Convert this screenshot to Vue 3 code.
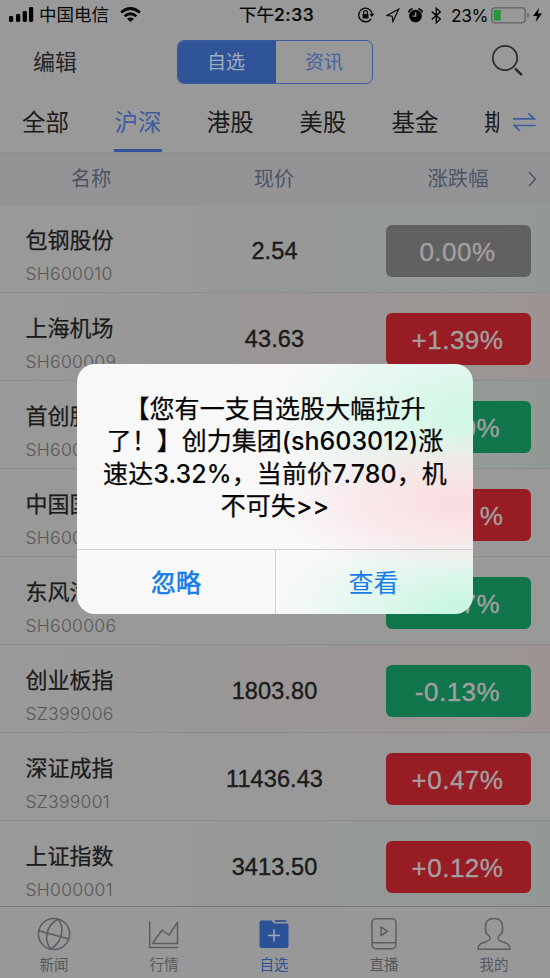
<script setup>
const tabs = ['全部', '沪深', '港股', '美股', '基金']
const stocks = [
  { name: '包钢股份', code: 'SH600010', price: '2.54', pct: '0.00%', tone: 'flat', tint: 'cool' },
  { name: '上海机场', code: 'SH600009', price: '43.63', pct: '+1.39%', tone: 'up', tint: 'warm' },
  { name: '首创股份', code: 'SH600008', price: '', pct: '-0.20%', tone: 'down', tint: 'cool' },
  { name: '中国国贸', code: 'SH600007', price: '', pct: '%', tone: 'up narrow', tint: 'plain' },
  { name: '东风汽车', code: 'SH600006', price: '', pct: '-0.17%', tone: 'down', tint: 'plain' },
  { name: '创业板指', code: 'SZ399006', price: '1803.80', pct: '-0.13%', tone: 'down', tint: 'warm' },
  { name: '深证成指', code: 'SZ399001', price: '11436.43', pct: '+0.47%', tone: 'up', tint: 'plain' },
  { name: '上证指数', code: 'SH000001', price: '3413.50', pct: '+0.12%', tone: 'up', tint: 'cool' },
]
</script>

<template>
  <div class="screen">
    <header class="status">
      <div class="st-left">
        <svg width="25" height="16" viewBox="0 0 25 16"><rect x="0" y="9" width="4.2" height="6" rx="1.4"/><rect x="7" y="7" width="4.2" height="8" rx="1.4"/><rect x="13.7" y="4" width="4.2" height="11" rx="1.4"/><rect x="20" y="0" width="4.2" height="15" rx="1.4"/></svg>
        <span class="carrier">中国电信</span>
        <svg class="wifi" width="21" height="16" viewBox="0 0 21 16" fill="none" stroke="#050505" stroke-width="2.7"><path d="M1.1 5.5Q10.5-2.5 19.9 5.5"/><path d="M4.6 9.2Q10.5 4.3 16.4 9.2"/><path d="M10.5 15 6.9 11.8Q10.5 9 14.1 11.8Z" fill="#050505" stroke="none"/></svg>
      </div>
      <div class="clock">下午<b>2:33</b></div>
      <div class="st-right">
        <svg width="17" height="16" viewBox="0 0 17 16" fill="none" stroke="#080808" stroke-width="1.4"><path d="M13.2 11.8A6.8 6.8 0 1 1 14.2 6.5"/><path d="M11.3 6.7h5.2l-2.6 3.2z" fill="#080808" stroke="none"/><rect x="4.5" y="7" width="6" height="4.5" fill="#080808" stroke="none"/><path d="M5.6 7V5.5q0-1.8 1.9-1.8t1.9 1.8V7" stroke-width="1.2"/></svg>
        <svg width="14" height="15" viewBox="0 0 14 15" fill="none" stroke="#111" stroke-width="1.25"><path d="M12.8 1 1 7.4l5.2.8.7 5.4z"/></svg>
        <svg width="15" height="15" viewBox="0 0 15 15"><circle cx="7.5" cy="8" r="6.3"/><path d="M.8 4.5Q1.2 1.2 4.7.9M10.3.9q3.5.3 3.9 3.6" fill="none" stroke="#080808" stroke-width="1.7"/><path d="M7.7 4.2v4H4.6" fill="none" stroke="#999" stroke-width="1.3"/></svg>
        <svg width="11" height="17" viewBox="0 0 11 17" fill="none" stroke="#080808" stroke-width="1.4"><path d="M.8 4.6 9.3 12l-4 3.7V1.3l4 3.7-8.5 7.4"/></svg>
        <span class="battery-text">23%</span>
        <svg width="39" height="17" viewBox="0 0 39 17"><rect x=".8" y=".8" width="33.4" height="15" rx="3" fill="none" stroke="#626262" stroke-width="1.3"/><rect x="2.7" y="3" width="7" height="10.6" fill="#26963b"/><path d="M36.1 5.8q2 .5 2 2.5t-2 2.5z" fill="#686868"/></svg>
        <svg class="bolt" width="9" height="14" viewBox="0 0 9 14"><path d="M6 0 0 8h4L2.8 14 9 5.6H5z"/></svg>
      </div>
    </header>

    <nav class="nav">
      <span class="edit">编辑</span>
      <div class="segment"><span class="seg on">自选</span><span class="seg">资讯</span></div>
      <svg class="search" width="34" height="34" viewBox="0 0 34 34" fill="none" stroke="#2b2b2b"><circle cx="14" cy="14" r="12.2" stroke-width="1.7"/><path d="m25 25.500 5 4.800" stroke-width="2.500" stroke-linecap="square"/></svg>
    </nav>

    <div class="tabs">
      <span v-for="(t, i) in tabs" :key="t" class="tab" :class="{ active: i === 1 }">{{ t }}</span>
      <span class="tab cut">期</span>
      <svg class="swap" width="23" height="20" viewBox="0 0 23 20" fill="none" stroke="#3f5ea0" stroke-width="1.7"><path d="M0 6.800h21.200L15.400 1.500M22.500 13.500H1.200L7 18.800"/></svg>
    </div>

    <div class="cols">
      <span>名称</span><span>现价</span><span>涨跌幅</span>
      <svg width="9" height="16" viewBox="0 0 9 16" fill="none" stroke="#4d5362" stroke-width="1.5"><path d="m1 1 6.500 7L1 15"/></svg>
    </div>

    <main class="list">
      <div v-for="s in stocks" :key="s.code" class="row" :class="s.tint">
        <div class="ident"><div class="name">{{ s.name }}</div><div class="code">{{ s.code }}</div></div>
        <div class="price">{{ s.price }}</div>
        <div class="badge" :class="s.tone">{{ s.pct }}</div>
      </div>
    </main>

    <footer class="tabbar">
      <div class="item">
        <svg width="34" height="34" viewBox="0 0 34 34"><circle cx="17" cy="17" r="15.600"/><path d="M1.800 13.800 31.800 22M21 2q-9 5-11 14.500-1.500 9 3.500 15.500M21 2q5 6 3.500 15-2 10-11 15"/></svg>
        <span>新闻</span>
      </div>
      <div class="item">
        <svg width="34" height="34" viewBox="0 0 34 34"><path d="M2.700 4.500v26h28.500"/><path d="M5.500 26.500 15 13l7 5 8.500-12.700v21.200z"/></svg>
        <span>行情</span>
      </div>
      <div class="item on">
        <svg width="34" height="34" viewBox="0 0 34 34"><path d="M2.500 5.500q0-2 2-2h10l2.500 3h12.500q2 0 2 2V29q0 2-2 2h-25q-2 0-2-2z" fill="#2b5197" stroke="none"/><path d="M18 4h11.500" stroke="#2b5197" stroke-width="1.700"/><path d="M17 12.500v12M11 18.500h12" stroke="#a3acbb" stroke-width="1.500"/></svg>
        <span>自选</span>
      </div>
      <div class="item">
        <svg width="34" height="34" viewBox="0 0 34 34"><rect x="5" y="1.700" width="24" height="30" rx="4"/><path d="M5 25.800h24M14 10v8.500l6.500-4.200z"/></svg>
        <span>直播</span>
      </div>
      <div class="item">
        <svg width="34" height="34" viewBox="0 0 34 34"><path d="M1 32.300q0-5 5-6.500 7-2 7-4.500 0-1.500-1.500-3-3-1.500-3-5.500V9.500q0-8 8.500-8t8.500 8v3.300q0 4-3 5.500-1.500 1.500-1.500 3 0 2.500 7 4.500 5 1.500 5 6.500z"/></svg>
        <span>我的</span>
      </div>
    </footer>

    <section class="dialog">
      <div class="message">
        <p class="l1">【您有一支自选股大幅拉升</p>
        <p class="l2">了！】创力集团<i>(sh603012)</i>涨</p>
        <p class="l3">速达<i>3.32%</i>，当前价<i>7.780</i>，机</p>
        <p class="l4">不可失<i>&gt;&gt;</i></p>
      </div>
      <div class="actions"><span class="ignore">忽略</span><span>查看</span></div>
    </section>
  </div>
</template>

<style>
body { margin: 0; }
</style>

<style scoped>
* { box-sizing: border-box; }
.screen { position: relative; width: 550px; height: 978px; overflow: hidden; display: flex; flex-direction: column; background: #999; color: #1b1b1b; font-family: Inter, "Noto Sans CJK SC", sans-serif; }
svg { display: block; flex: none; }
.status { height: 30px; flex: none; display: grid; grid-template-columns: 239px 119px 1fr; align-items: center; color: #050505; }
.st-left { display: flex; align-items: center; padding-left: 9px; }
.carrier { font-size: 17.500px; line-height: 28px; margin-left: 5px; width: 76px; white-space: nowrap; }
.wifi { margin-left: 5px; }
.clock { font-size: 17.500px; line-height: 28px; white-space: nowrap; -webkit-text-stroke: .2px #050505; }
.clock b { font-weight: 500; letter-spacing: .55px; }
.st-right { display: flex; align-items: center; }
.st-right svg:nth-child(2) { margin-left: 11px; }
.st-right svg:nth-child(3) { margin-left: 8px; }
.st-right svg:nth-child(4) { margin-left: 8px; }
.battery-text { font-size: 17.300px; width: 36px; margin-left: 9px; margin-right: 4px; white-space: nowrap; letter-spacing: -.4px; }
.bolt { margin-left: 3px; }
.nav { height: 62px; flex: none; display: flex; align-items: flex-start; padding: 10px 0 0 33px; }
.edit { width: 144px; font-size: 22px; line-height: 45px; color: #262626; }
.segment { width: 196px; height: 44px; display: flex; border: 1.500px solid #3a5c9d; border-radius: 7px; overflow: hidden; }
.seg { flex: 1; text-align: center; font-size: 19px; line-height: 43px; color: #4662a0; }
.seg.on { background: #2f5497; color: #a1acc0; padding-right: 2px; }
.search { margin: 4px 0 0 118px; }
.tabs { height: 60px; flex: none; display: flex; padding-left: 22px; }
.tab { width: 48px; margin-right: 44.400px; font-size: 23.500px; line-height: 61px; height: 60px; white-space: nowrap; }
.tab.active { color: #3e5c9e; border-bottom: 3px solid #34519b; }
.tab.cut { width: 15px; overflow: hidden; margin-right: 14px; }
.swap { margin-top: 20px; }
.cols { height: 53px; flex: none; display: grid; grid-template-columns: 182px 184px 175px 0; align-items: center; background: #949497; border-top: 1px solid #8f8f91; text-align: center; color: #4c5465; font-size: 20.300px; line-height: 50px; padding-bottom: 1px; }
.cols span:nth-child(3) { padding-left: 9px; }
.cols svg { justify-self: end; margin-right: 4px; }
.list { height: 701px; flex: none; overflow: hidden; }
.row { height: 88px; display: grid; grid-template-columns: 163px 223px 145px; border-bottom: 1px solid #8b8c8f; }
.row.cool { background: linear-gradient(90deg, #999 20%, #929994); }
.row.warm { background: linear-gradient(90deg, #999 5%, #9b9492); }
.ident { padding: 19px 0 0 25.500px; }
.name { font-size: 22px; line-height: 32px; white-space: nowrap; -webkit-text-stroke: .25px #1b1b1b; }
.code { margin-top: 8px; font-size: 17.500px; line-height: 20px; font-weight: 300; letter-spacing: .3px; color: #585858; }
.price { text-align: center; font: 23.500px/93px "Liberation Sans", sans-serif; letter-spacing: .1px; -webkit-text-stroke: .4px #1b1b1b; }
.badge { margin-top: 20px; height: 52px; border-radius: 6px; padding-right: 2px; text-align: center; font: 26px/54px "Liberation Sans", sans-serif; letter-spacing: .5px; color: #a39fa0; -webkit-text-stroke: .35px #a39fa0; }
.badge.narrow { padding-left: 68px; }
.flat { background: #616161; }
.up { background: #981c24; }
.down { background: #10754b; }
.tabbar { flex: 1; border-top: 1px solid #78797c; background: #989898; display: grid; grid-template-columns: repeat(5, 110px); }
.item { display: flex; flex-direction: column; align-items: center; padding: 10px 2px 0 0; color: #56585e; font-size: 14.500px; line-height: 28px; }
.item svg { fill: none; stroke: #5b5d63; stroke-width: 1.500; stroke-linejoin: round; }
.item.on { color: #2d5196; }
.dialog { position: absolute; left: 77px; top: 364px; width: 396px; height: 250px; border-radius: 18px; overflow: hidden; color: #050505; background: radial-gradient(ellipse 190px 72px at 390px 138px, #fadfe2 15%, rgba(250,223,226,.6) 55%, rgba(250,223,226,0) 100%), radial-gradient(ellipse 200px 105px at 396px 52px, #d2f7e6 10%, rgba(210,247,230,.5) 55%, rgba(210,247,230,0) 100%), radial-gradient(ellipse 190px 80px at 390px 245px, #caf6e2 10%, rgba(202,246,226,.5) 50%, rgba(202,246,226,0) 100%), #f8f8f8; }
.message { height: 185px; padding-top: 29px; text-align: center; font-size: 25px; line-height: 32.300px; white-space: nowrap; -webkit-text-stroke: .25px #050505; }
.message p { margin: 0; }
.message .l1, .message .l3 { letter-spacing: .1px; }
.message i { font-style: normal; font-weight: 500; -webkit-text-stroke: 0; }
.actions { height: 65px; border-top: 1px solid #cfcfd1; display: grid; grid-template-columns: 199px 197px; text-align: center; font-size: 25px; line-height: 67px; color: #167ce8; }
.actions span:last-child { padding-right: 2px; }
.ignore { border-right: 1px solid #cfcfd1; -webkit-text-stroke: .6px #167ce8; }
</style>
